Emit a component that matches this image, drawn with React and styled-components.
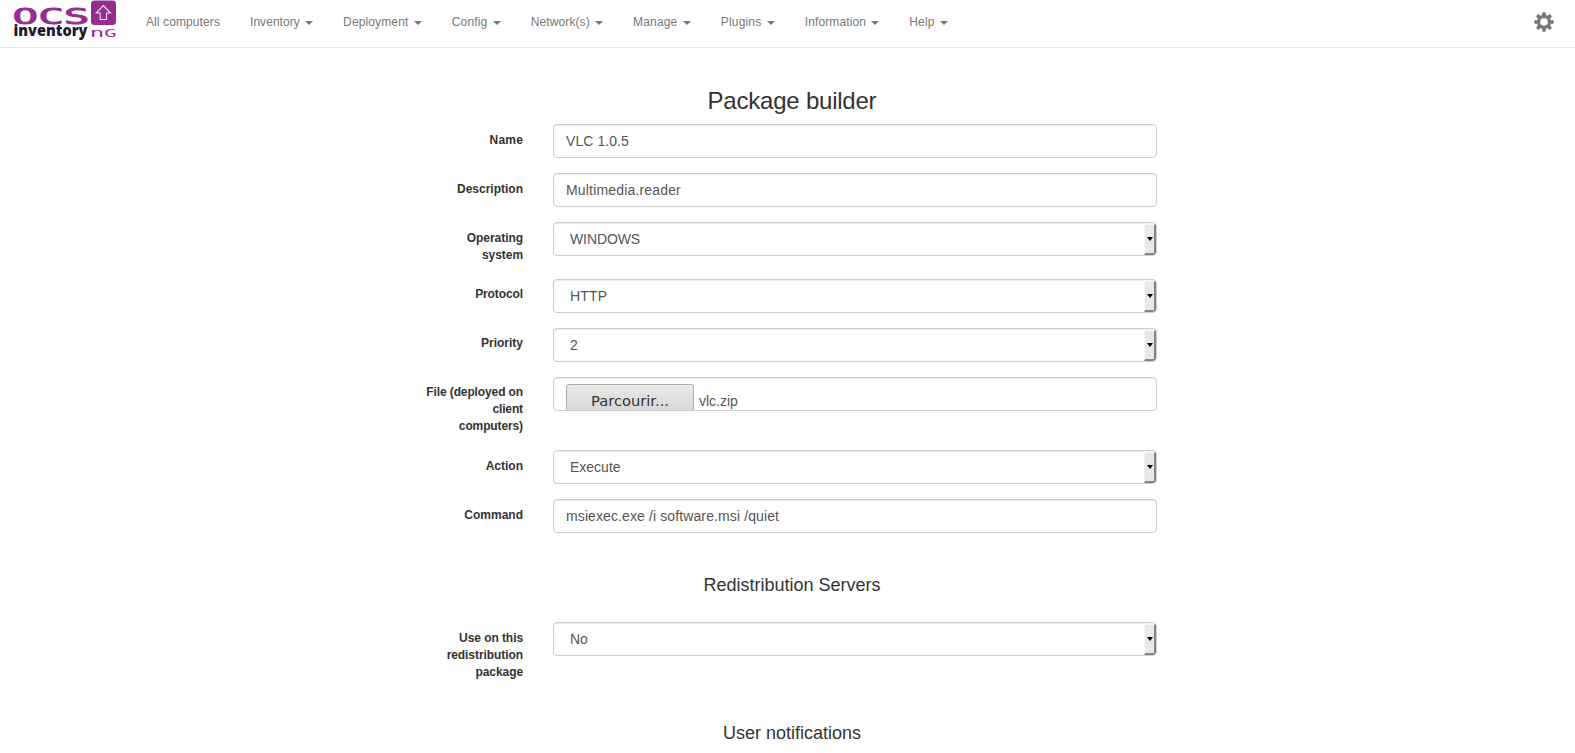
import React from 'react';
import styled, { createGlobalStyle } from 'styled-components';

const Global = createGlobalStyle`
  * { box-sizing: border-box; }
  html, body { margin: 0; height: 100%; overflow: hidden; }
  body {
    background: #fff;
    color: #333;
    font: 12px/1.42857143 "Liberation Sans", Arial, sans-serif;
  }
`;

const Navbar = styled.nav`
  display: flex;
  align-items: flex-start;
  height: 48px;
  border-bottom: 1px solid #e7e7e7;
  padding: 0 21px 0 13px;
`;

const Logo = styled.svg`
  width: 105px;
  height: 42px;
  flex: none;
`;

const Menu = styled.ul`
  display: flex;
  list-style: none;
  margin: 0 auto 0 13px;
  padding: 0;
`;

const MenuItem = styled.li`
  display: flex;
  align-items: center;
  padding: 14px 15px 0;
  color: #777;
  letter-spacing: ${p => p.$tracking || 0}px;
  white-space: nowrap;
`;

const Caret = styled.span`
  margin: 1px 0 0 5.3px;
  border-top: 4px solid #777;
  border-left: 4px solid transparent;
  border-right: 4px solid transparent;
`;

const Gear = styled.svg`
  width: 20px;
  height: 20px;
  margin-top: 12px;
`;

const Form = styled.form`
  width: 738px;
  margin: 40.4px 0 0 423px;
`;

const Title = styled.h3`
  margin: 0 0 9.6px;
  font-size: 24px;
  font-weight: 400;
  line-height: 26.4px;
  letter-spacing: -0.22px;
  text-align: center;
`;

const Subtitle = styled.h4`
  margin: ${p => p.$top}px 0 27.5px;
  font-size: 18px;
  line-height: 20px;
  font-weight: 400;
  text-align: center;
`;

const Row = styled.div`
  display: flex;
  align-items: flex-start;
  gap: 30px;
  margin-bottom: 15px;
`;

const Label = styled.label`
  width: 100px;
  padding-top: 7.5px;
  margin-bottom: -0.5px;
  font-weight: 700;
  letter-spacing: ${p => p.$tracking || 0}px;
  text-align: right;
  white-space: pre-line;
`;

const Control = styled.div`
  display: flex;
  align-items: center;
  width: 604px;
  height: 34px;
  padding-left: ${p => (p.$select ? 16 : 12)}px;
  border: 1px solid #ccc;
  border-radius: 4px;
  box-shadow: inset 0 1px 1px rgba(0, 0, 0, 0.075);
  font-size: 14px;
  letter-spacing: ${p => p.$tracking || 0}px;
  color: #555;
  overflow: hidden;
`;

const DropButton = styled.span`
  display: flex;
  align-items: center;
  justify-content: center;
  width: 12px;
  height: 32px;
  margin-left: auto;
  background: #e8e8e7;
  border: solid;
  border-width: 2px 2px 2px 1px;
  border-color: #f6f6f5 #858585 #858585 #f6f6f5;
  border-radius: 0 3px 3px 0;
  &::after {
    content: '';
    border-top: 4px solid #000;
    border-left: 3.5px solid transparent;
    border-right: 3.5px solid transparent;
  }
`;

const FileControl = styled(Control)`
  align-items: flex-start;
  padding-top: 6px;
`;

const Browse = styled.span`
  width: 128px;
  height: 34px;
  margin-right: 5px;
  border: 1px solid #adadad;
  border-radius: 3px;
  background: linear-gradient(#e9e9e8, #d3d3d2);
  color: #333;
  font: 14.67px/31px "DejaVu Sans", sans-serif;
  text-align: center;
`;

const FileName = styled.span`
  line-height: 34px;
`;

const menu = [
  ['Inventory', 0.05],
  ['Deployment', 0.13],
  ['Config', 0.17],
  ['Network(s)', 0.1],
  ['Manage', 0.17],
  ['Plugins', 0.18],
  ['Information', 0.12],
  ['Help', 0.1],
];

function Field({ label, value, select, labelTracking, tracking }) {
  return (
    <Row>
      <Label $tracking={labelTracking}>{label}</Label>
      <Control $select={select} $tracking={tracking}>
        {value}
        {select && <DropButton />}
      </Control>
    </Row>
  );
}

export default function App() {
  return (
    <>
      <Global />
      <Navbar>
        <Logo viewBox="13 0 105 42">
          <text x="12.5" y="24" fontFamily="DejaVu Sans Mono" fontSize="22" textLength="77" lengthAdjust="spacingAndGlyphs" fill="#952d8f" stroke="#952d8f" strokeWidth="0.9">OCS</text>
          <text x="13.5" y="36.4" fontFamily="Open Sans" fontWeight="800" fontSize="15" textLength="74" lengthAdjust="spacingAndGlyphs" fill="#1b1b2f">inventory</text>
          <text x="89.8" y="37.2" fontFamily="DejaVu Sans Mono" fontSize="11" textLength="27" lengthAdjust="spacingAndGlyphs" fill="#952d8f"><tspan fontSize="12.3">n</tspan><tspan fontSize="10.5">G</tspan></text>
          <rect x="91" y="0.5" width="25" height="24.5" rx="3.5" fill="#952d8f" />
          <path d="M103.3 5.5 L110.5 13 H106.5 V19.5 H100.2 V13 H96.2 Z" fill="none" stroke="#f3dff2" strokeWidth="1.1" />
        </Logo>
        <Menu>
          <MenuItem $tracking={0.1}>All computers</MenuItem>
          {menu.map(([name, tracking]) => (
            <MenuItem key={name} $tracking={tracking}>{name}<Caret /></MenuItem>
          ))}
        </Menu>
        <Gear viewBox="-10 -10 20 20">
          {[0, 45, 90, 135].map(a => (
            <rect key={a} x="-1.8" y="-9.8" width="3.6" height="19.6" rx="1" fill="#777" transform={`rotate(${a})`} />
          ))}
          <circle r="7.2" fill="#777" />
          <circle r="3.8" fill="#fff" />
        </Gear>
      </Navbar>
      <Form>
        <Title>Package builder</Title>
        <Field label="Name" value="VLC 1.0.5" labelTracking={0.2} tracking={0.07} />
        <Field label="Description" value="Multimedia.reader" tracking={0.17} />
        <Field label="Operating system" value="WINDOWS" select labelTracking={-0.05} tracking={-0.1} />
        <Field label="Protocol" value="HTTP" select labelTracking={-0.1} tracking={0.15} />
        <Field label="Priority" value="2" select />
        <Row>
          <Label $tracking={-0.12}>{'File (deployed on\nclient\ncomputers)'}</Label>
          <FileControl>
            <Browse>Parcourir...</Browse>
            <FileName>vlc.zip</FileName>
          </FileControl>
        </Row>
        <Field label="Action" value="Execute" select />
        <Field label="Command" value="msiexec.exe /i software.msi /quiet" tracking={0.11} />
        <Subtitle $top={41.5}>Redistribution Servers</Subtitle>
        <Field label="Use on this redistribution package" value="No" select labelTracking={-0.07} />
        <Subtitle $top={42.3}>User notifications</Subtitle>
      </Form>
    </>
  );
}
